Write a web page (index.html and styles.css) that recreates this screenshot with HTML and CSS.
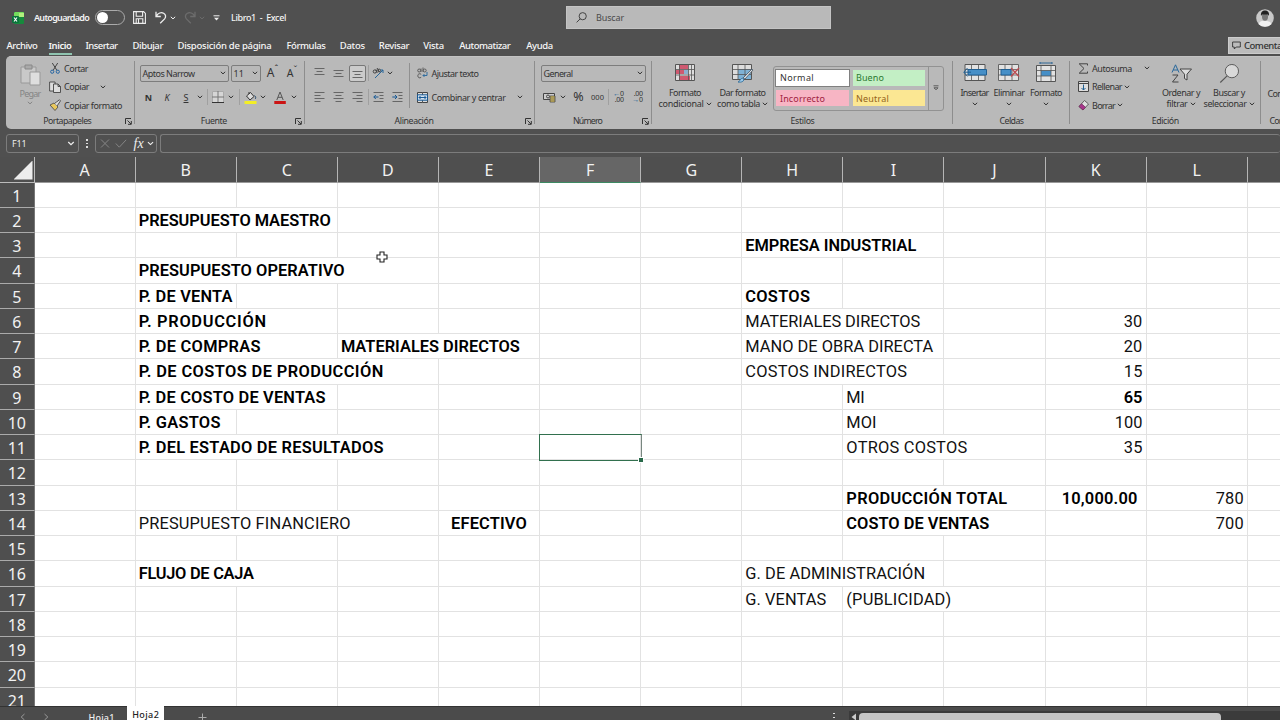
FILE: index.html
```html
<!DOCTYPE html>
<html lang="es">
<head>
<meta charset="utf-8">
<title>Libro1 - Excel</title>
<link rel="stylesheet" href="styles.css">
</head>
<body>
<svg width="0" height="0" class="defs">
  <symbol id="chev" viewBox="0 0 6 4"><path d="M.8.8 3 2.9 5.2.8" fill="none" stroke="currentColor" stroke-width="1"/></symbol>
  <symbol id="launch" viewBox="0 0 7 7"><path d="M.5 6V.5H6M2.5 2.5 6 6M6.3 3v3.3H3" fill="none" stroke="currentColor" stroke-width="1"/></symbol>
</svg>
<div class="app">
  <header class="title">
    <svg class="logo" width="12" height="12" viewBox="0 0 12 12"><rect x="2" y="0" width="10" height="12" rx="1" fill="#168a3c"/><path d="M3 0h8a1 1 0 0 1 1 1v4H2V1z" fill="#74dc5d"/><path d="M7 1h5v4H7z" fill="#b2ef7e"/><rect y="4" width="7" height="7" rx="1" fill="#08733b"/><path d="M2 5.5 5 9.5M5 5.5 2 9.5" stroke="#fff" stroke-width="1.1"/></svg>
    <b class="auto" data-w="55">Autoguardado</b>
    <span class="toggle"></span>
    <svg class="save" width="13" height="13" viewBox="0 0 13 13" fill="none" stroke="#eee" stroke-width="1.1"><path d="M.6.6h10L12.4 2.4v10H.6zM3.2.8v4.4h6.4V.8M3.2 12.2V7.8h6.6v4.4M5.5 8v4"/></svg>
    <svg class="undo" width="12" height="13" viewBox="0 0 12 13" fill="none" stroke="#eee" stroke-width="1.3"><path d="M1 .8v4.7h4.8M1.2 5.2C3 2 6.2.9 8.6 2.2c2.4 1.3 2.5 4 1 5.7L5.2 12.3"/></svg>
    <svg class="c1 light" width="6" height="4"><use href="#chev"/></svg>
    <svg class="redo" width="12" height="13" viewBox="0 0 12 13" fill="none" stroke="#6c6c6c" stroke-width="1.3"><path d="M11 .8v4.7H6.2M10.8 5.2C9 2 5.8.9 3.4 2.2c-2.4 1.3-2.5 4-1 5.7l4.4 4.4"/></svg>
    <svg class="c2" width="6" height="4"><use href="#chev"/></svg>
    <svg class="qat" width="7" height="6" viewBox="0 0 7 6"><path d="M.5.8h6" stroke="#eee"/><path d="M1 2.8h5L3.5 5.5z" fill="#eee"/></svg>
    <span class="book" data-w="55">Libro1&nbsp; -&nbsp; Excel</span>
    <div class="search"><svg width="11" height="11" viewBox="0 0 11 11" fill="none" stroke="#444" stroke-width="1"><circle cx="6.7" cy="4.2" r="3.6"/><path d="M4.2 6.8.6 10.4"/></svg><span data-w="28">Buscar</span></div>
    <svg class="avatar" width="18" height="18" viewBox="0 0 18 18"><circle cx="9" cy="9" r="8.8" fill="#c9c9c9"/><path d="M2.5 15C4 11.5 6 12 9 12s5 0 6.5 3A8.8 8.8 0 0 1 2.5 15z" fill="#f0f0f0"/><ellipse cx="9" cy="7.8" rx="3" ry="4" fill="#777"/><path d="M5 7C4.500 3 6.500 1.500 9 1.500S13.500 3 13 7L12 5.500H6z" fill="#222"/></svg>
  </header>
  <nav class="tabs">
    <span class="tab t1" data-w="31">Archivo</span><span class="tab t2 on" data-w="23">Inicio</span><span class="tab t3" data-w="32">Insertar</span><span class="tab t4" data-w="30.500">Dibujar</span><span class="tab t5" data-w="94">Disposición de página</span><span class="tab t6" data-w="39">Fórmulas</span><span class="tab t7" data-w="25">Datos</span><span class="tab t8" data-w="30.500">Revisar</span><span class="tab t9" data-w="20.500">Vista</span><span class="tab t10" data-w="51">Automatizar</span><span class="tab t11" data-w="26.500">Ayuda</span>
    <div class="comments"><svg width="9" height="9" viewBox="0 0 9 9" fill="none" stroke="#333" stroke-width=".9"><path d="M.6 1h7.700v5H4.200L2.300 8V6H.6z"/></svg><span data-w="53">Comentarios</span></div>
  </nav>

  <section class="ribbon">
    <div class="group g-clip">
      <div class="body clip">
        <div class="paste"><svg width="21" height="22" viewBox="0 0 21 22"><path d="M1 3h15v16H1z" fill="#c9c9c9" stroke="#999"/><path d="M5 1h7v4H5z" fill="#aaa" stroke="#888"/><path d="M10 8h10v13H10z" fill="#dedede" stroke="#999"/></svg><span data-w="21">Pegar</span><svg width="6" height="4"><use href="#chev"/></svg></div>
        <div class="stack">
          <div class="li"><svg width="12" height="12" viewBox="0 0 12 12" fill="none"><path d="M3.300 1 8 8.500M8.700 1 4 8.500" stroke="#444"/><circle cx="3.200" cy="9.700" r="1.600" stroke="#2767a5"/><circle cx="8.800" cy="9.700" r="1.600" stroke="#2767a5"/></svg><span data-w="24">Cortar</span></div>
          <div class="li"><svg width="12" height="12" viewBox="0 0 12 12" fill="#ddd" stroke="#444" stroke-width=".9"><path d="M.6 1h5.500v9H.6z"/><path d="M4.500 3H9l2.500 2.500v6h-7zM9 3v2.500h2.500"/></svg><span data-w="25">Copiar</span><svg class="gap" width="6" height="4"><use href="#chev"/></svg></div>
          <div class="li"><svg width="12" height="12" viewBox="0 0 12 12"><path d="m1 6 4-2 4 4-3 3.500z" fill="#e9c85c" stroke="#444" stroke-width=".8"/><path d="m5.500 4.500 2-1.500L10.500.8l1 1L9.400 5 8 7" fill="#ddd" stroke="#444" stroke-width=".9"/></svg><span data-w="58">Copiar formato</span></div>
        </div>
      </div>
      <div class="label"><span data-w="48">Portapapeles</span><svg class="launch" width="7" height="7"><use href="#launch"/></svg></div>
    </div>

    <div class="group g-font">
      <div class="body">
        <div class="row font1"><div class="combo"><span data-w="52">Aptos Narrow</span><svg width="6" height="4"><use href="#chev"/></svg></div><div class="combo"><span>11</span><svg width="6" height="4"><use href="#chev"/></svg></div><span class="big">A<sup>ˆ</sup></span><span class="big sm">A<sup>ˇ</sup></span></div>
        <div class="row font2"><b>N</b><i>K</i><u>S</u><svg width="6" height="4"><use href="#chev"/></svg><em class="sep"></em>
          <svg width="12" height="12" viewBox="0 0 12 12"><path d="M.5.5h11v11H.5z" fill="#d6d6d6" stroke="#aaa"/><path d="M6 0v12M0 6h12" stroke="#777"/><path d="M0 11.500h12" stroke="#333"/></svg><svg width="6" height="4"><use href="#chev"/></svg><em class="sep"></em>
          <svg width="13" height="13" viewBox="0 0 13 13"><path d="m2.500 5 4-3.500 3.500 4-4 3.500z" fill="#ddd" stroke="#333"/><path d="M5 3V1" stroke="#333"/><path d="M10.500 4.500c1.500 1 1.500 3 .5 3.500" stroke="#246" fill="none"/><path d="M.5 10h12v3H.5z" fill="#f3ee25"/></svg><svg width="6" height="4"><use href="#chev"/></svg>
          <svg width="12" height="13" viewBox="0 0 12 13"><path d="M2.800 9 6 1l3.200 8M4 6.300h4" stroke="#555" fill="none"/><path d="M.3 10h11.500v3H.3z" fill="#cb1414"/></svg><svg width="6" height="4"><use href="#chev"/></svg></div>
      </div>
      <div class="label"><span data-w="26">Fuente</span><svg class="launch" width="7" height="7"><use href="#launch"/></svg></div>
    </div>

    <div class="group g-align">
      <div class="body duo">
        <div class="left">
          <div class="row al1">
            <svg width="11" height="11" viewBox="0 0 11 11"><path d="M.5 .5h10M2.500 3.500h6M.5 6.500h10" stroke="#666"/></svg>
            <svg width="11" height="11" viewBox="0 0 11 11"><path d="M.5 2.500h10M2.500 5.500h6M.5 8.500h10" stroke="#666"/></svg>
            <span class="pressed"><svg width="11" height="11" viewBox="0 0 11 11"><path d="M.5 3.500h10M2.500 6.500h6M.5 9.500h10" stroke="#666"/></svg></span><em class="sep"></em>
            <svg width="12" height="12" viewBox="0 0 12 12" fill="none"><circle cx="2.800" cy="4.500" r="1.600" stroke="#444"/><path d="M4 2.500 5.200 6M5 1l2.500 4" stroke="#444"/><circle cx="7.200" cy="3.500" r="1.400" stroke="#444"/><path d="M3 11 11 3M11 6V3H8.500" stroke="#27679b"/></svg><svg width="6" height="4"><use href="#chev"/></svg>
          </div>
          <div class="row al2">
            <svg width="11" height="12" viewBox="0 0 11 12"><path d="M.5 1.500h10M.5 4.500h6M.5 7.500h10M.5 10.500h6" stroke="#666"/></svg>
            <svg width="11" height="12" viewBox="0 0 11 12"><path d="M.5 1.500h10M2.500 4.500h6M.5 7.500h10M2.500 10.500h6" stroke="#666"/></svg>
            <svg width="11" height="12" viewBox="0 0 11 12"><path d="M.5 1.500h10M4.500 4.500h6M.5 7.500h10M4.500 10.500h6" stroke="#666"/></svg><em class="sep"></em>
            <svg width="11" height="12" viewBox="0 0 11 12" fill="none"><path d="M.5 1.500h10M6.500 4.500h4M6.500 7.500h4M.5 10.500h10" stroke="#666"/><path d="M5.500 6H.8M2.800 4l-2 2 2 2" stroke="#175995"/></svg>
            <svg width="11" height="12" viewBox="0 0 11 12" fill="none"><path d="M.5 1.500h10M6.500 4.500h4M6.500 7.500h4M.5 10.500h10" stroke="#666"/><path d="M.3 6H5M3 4l2 2-2 2" stroke="#175995"/></svg>
          </div>
        </div>
        <div class="right">
          <div class="row al3"><svg width="11" height="12" viewBox="0 0 11 12" fill="none" stroke="#555" stroke-width=".9"><circle cx="2.200" cy="3.500" r="1.500"/><path d="M4 1.500V5M6 .5V5"/><circle cx="7.700" cy="3.500" r="1.500"/><path d="M4.200 7.300C2.500 6 .8 7 .8 8.800s1.700 2.800 3.400 1.500"/><path d="M10 5v3.500H6M7.500 7 6 8.500 7.500 10" stroke="#27679b"/></svg><span data-w="47">Ajustar texto</span></div>
          <div class="row al4"><svg width="11" height="11" viewBox="0 0 11 11" fill="none"><path d="M.5.500h10v10H.5z" fill="#ddd" stroke="#444"/><path d="M5.500 0v3M5.500 8v3" stroke="#555"/><path d="M.5 2.800h10v5.400H.5z" fill="#d6e2ee" stroke="#175995"/><path d="M2 5.500h7M3.500 4 2 5.500 3.500 7M7.500 4 9 5.500 7.500 7" stroke="#175995"/></svg><span data-w="74">Combinar y centrar</span><svg class="mchev" width="6" height="4"><use href="#chev"/></svg></div>
        </div>
      </div>
      <div class="label"><span data-w="39">Alineación</span><svg class="launch" width="7" height="7"><use href="#launch"/></svg></div>
    </div>

    <div class="group g-num">
      <div class="body">
        <div class="row num1"><div class="combo"><span data-w="29">General</span><svg width="6" height="4"><use href="#chev"/></svg></div></div>
        <div class="row num2"><svg width="13" height="11" viewBox="0 0 13 11"><path d="M.5 1.500h11v6H.5z" fill="#ccc" stroke="#444"/><circle cx="5" cy="4.500" r="1.500" fill="none" stroke="#444"/><path d="M7 4h5v6H7z" fill="#e4c95a" stroke="#444" stroke-width=".8"/><path d="M7 6h5M7 8h5" stroke="#555" stroke-width=".8"/></svg><svg width="6" height="4"><use href="#chev"/></svg><span class="pct">%</span><span class="zeros">000</span><em class="sep"></em>
          <span class="dec"><span><s>←</s>0</span><span>.00</span></span><span class="dec"><span>.00</span><span><s>→</s>0</span></span></div>
      </div>
      <div class="label"><span data-w="29">Número</span><svg class="launch" width="7" height="7"><use href="#launch"/></svg></div>
    </div>

    <div class="group g-style">
      <div class="body styles">
        <div class="tall"><svg width="20" height="17" viewBox="0 0 20 17"><path d="M.5.500h19v16H.5z" fill="#ddd" stroke="#555"/><path d="M4 1h9v4H4zM4 12h11v4H4zM1 6h8v4H1z" fill="#cf5970"/><path d="M9 6h4v4H9z" fill="#8eafd0"/><path d="M.5 5.500h19M.5 11h19M4.500.5v16M13.500.5v16M16.500.5v16" stroke="#555" stroke-width=".8"/></svg><span data-w="32">Formato</span><span><span data-w="45">condicional</span><svg width="6" height="4"><use href="#chev"/></svg></span></div>
        <div class="tall"><svg width="22" height="19" viewBox="0 0 22 19"><path d="M.5.500h19v15H.5z" fill="#ddd" stroke="#555"/><path d="M6 5h13v10H6z" fill="#7fb2d5"/><path d="M.5 5.500h19M.5 10.500h19M6 .5v15M13 .5v15" stroke="#555" stroke-width=".8"/><path d="m20 5 1 1-8 9-2-1z" fill="#ddd" stroke="#456" stroke-width=".8"/><path d="M6 18c2 0 2-4 5-4 2 2 0 5-5 4z" fill="#9dcaea" stroke="#2c6a97" stroke-width=".8"/></svg><span data-w="46">Dar formato</span><span><span data-w="43">como tabla</span><svg width="6" height="4"><use href="#chev"/></svg></span></div>
        <div class="gallery"><div class="chips"><span class="chip normal"><span data-w="34">Normal</span></span><span class="chip good"><span data-w="28">Bueno</span></span><span class="chip bad"><span data-w="45">Incorrecto</span></span><span class="chip neutral"><span data-w="33">Neutral</span></span></div><div class="more"><svg width="6" height="6" viewBox="0 0 6 6" fill="none" stroke="#444" stroke-width=".8"><path d="M.5.800h5M1 2.800h4L3 4.800z"/></svg></div></div>
      </div>
      <div class="label"><span data-w="24">Estilos</span></div>
    </div>

    <div class="group g-cells">
      <div class="body cellsb">
        <div class="tall"><svg width="24" height="17" viewBox="0 0 24 17"><path d="M2 .5h20v16H2z" fill="#e2e2e2" stroke="#555"/><path d="M2 5.500h20M2 11h20M8.500.5v16M15.500.5v16" stroke="#555" stroke-width=".8"/><path d="M5 5.500h18.500V11H5z" fill="#468fc7" stroke="#205f92"/><path d="M8 8.200H1M4.500 4 .8 8.200l3.700 4.200" fill="none" stroke="#205f92"/></svg><span data-w="28">Insertar</span><svg width="6" height="4"><use href="#chev"/></svg></div>
        <div class="tall"><svg width="22" height="17" viewBox="0 0 22 17"><path d="M.5.500h20v16H.5z" fill="#e2e2e2" stroke="#666"/><path d="M.5 5.500h20M.5 11h20M7 .5v16M14 .5v16" stroke="#555" stroke-width=".8"/><path d="M3 5.500h10V11H3z" fill="#468fc7" stroke="#205f92"/><path d="m13 4 8 8.500M21 4l-8 8.500" stroke="#bb4b51" stroke-width="1.400"/></svg><span data-w="31">Eliminar</span><svg width="6" height="4"><use href="#chev"/></svg></div>
        <div class="tall fmt"><svg width="20" height="20" viewBox="0 0 20 20"><path d="M4 1h12M4 0v2M16 0v2" stroke="#205f92" stroke-width=".9"/><path d="M.5 3.500h19v16H.5z" fill="#e2e2e2" stroke="#555"/><path d="M5 8.500h10V14H5z" fill="#468fc7"/><path d="M.5 8.500h19M.5 14h19M5 3.500v16M15 3.500v16" stroke="#555" stroke-width=".8"/></svg><span data-w="32">Formato</span><svg width="6" height="4"><use href="#chev"/></svg></div>
      </div>
      <div class="label"><span data-w="24">Celdas</span></div>
    </div>

    <div class="group g-edit">
      <div class="body edit">
        <div class="stack">
          <div class="li"><svg width="11" height="11" viewBox="0 0 11 11"><path d="M9.500 2.500V.8H1.200L6 5.500 1.200 10.200h8.300V8.500" fill="none" stroke="#444"/></svg><span data-w="40">Autosuma</span><svg class="gap" width="6" height="4"><use href="#chev"/></svg></div>
          <div class="li"><svg width="11" height="11" viewBox="0 0 11 11"><path d="M.5.500h10v10H.5z" fill="#ddd" stroke="#444"/><path d="M.5 2.500h10" stroke="#444"/><path d="M5.500 3.500V9M3.500 7l2 2 2-2" fill="none" stroke="#205f92"/></svg><span data-w="30">Rellenar</span><svg class="near" width="6" height="4"><use href="#chev"/></svg></div>
          <div class="li"><svg width="11" height="11" viewBox="0 0 11 11"><path d="m1 6.500 5.500-6 4 3.500L5 10z" fill="#e0e0e0" stroke="#444" stroke-width=".8"/><path d="m1 6.500 2.500-2.700L7.500 7.300 5 10z" fill="#a9358c" stroke="#743060" stroke-width=".8"/></svg><span data-w="23">Borrar</span><svg class="near" width="6" height="4"><use href="#chev"/></svg></div>
        </div>
        <div class="tall"><svg width="21" height="19" viewBox="0 0 21 19" fill="none"><path d="M1 8.500 4.500.8 8 8.500M2.300 6h4.500" stroke="#27679b"/><path d="M1.500 11h5.500L1.500 18H7.500" stroke="#444"/><path d="M9 5h11.500l-4.500 5.200V16l-2.500-1.500v-4.300z" fill="#ddd" stroke="#444"/></svg><span data-w="38">Ordenar y</span><span><span data-w="21">filtrar</span><svg width="6" height="4"><use href="#chev"/></svg></span></div>
        <div class="tall find"><svg width="21" height="20" viewBox="0 0 21 20"><circle cx="13" cy="7.500" r="7" fill="#d9d9d9" stroke="#555"/><path d="M8 12.500.8 19.500" stroke="#555" stroke-width="1.200"/></svg><span data-w="32">Buscar y</span><span><span data-w="43">seleccionar</span><svg width="6" height="4"><use href="#chev"/></svg></span></div>
      </div>
      <div class="label"><span data-w="27">Edición</span></div>
    </div>
    <div class="group g-last"><div class="body"><span data-w="56">Complementos</span></div><div class="label"><span data-w="54">Complementos</span></div></div>
  </section>

  <div class="formula">
    <div class="namebox"><span data-w="14.500">F11</span><svg width="8" height="5"><use href="#chev"/></svg></div>
    <span class="dots"></span>
    <div class="fxbox"><svg width="10" height="9" viewBox="0 0 10 9"><path d="m1 .5 8 8M9 .5l-8 8" stroke="#858585"/></svg><svg width="12" height="9" viewBox="0 0 12 9"><path d="m.8 4.500 3.500 3.700L11.200.8" fill="none" stroke="#858585"/></svg><i>fx</i><svg width="7" height="5"><use href="#chev"/></svg></div>
    <div class="input"></div>
  </div>

  <main class="sheet">
    <div class="heads" id="heads"></div>
    <div id="rows"></div>
    <div class="selection"></div>
    <svg class="cursor" width="12" height="12" viewBox="0 0 12 12"><path d="M4 1h4v3h3v4H8v3H4V8H1V4h3z" fill="#fff" stroke="#222" stroke-width="1.100"/></svg>
  </main>

  <footer class="bottom">
    <svg class="nav" width="6" height="8" viewBox="0 0 6 8"><path d="M4.500 1 1.200 4l3.300 3" fill="none" stroke="#999"/></svg>
    <svg class="nav" width="6" height="8" viewBox="0 0 6 8"><path d="M1.500 1l3.300 3-3.300 3" fill="none" stroke="#999"/></svg>
    <span class="sh1" data-w="26">Hoja1</span>
    <span class="sh2"><span data-w="27">Hoja2</span></span>
    <svg class="plus" width="9" height="9" viewBox="0 0 9 9"><path d="M4.500.5v8M.5 4.500h8" stroke="#aaa"/></svg>
    <span class="dots sdots"></span>
    <div class="track"><svg width="5" height="8" viewBox="0 0 5 8"><path d="M5 .5v7L.5 4z" fill="#ccc"/></svg><div class="thumb"></div></div>
  </footer>
</div>
<script src="sheet.js"></script>
</body>
</html>
```
FILE: styles.css
```css
* { box-sizing: border-box; }
body { margin: 0; background: #4f4f4f; font-family: "Noto Sans", "Open Sans", sans-serif; font-size: 9px; color: #333; overflow: hidden; }
.defs { position: absolute; }
svg { display: block; flex: none; }
span { white-space: nowrap; }
[data-w] { display: inline-block; flex: none; }
.app { width: 1280px; height: 720px; overflow: hidden; display: flex; flex-direction: column; background: #505050; }

.title { height: 35px; flex: none; display: flex; align-items: center; color: #f4f4f4; padding-left: 11.5px; }
.auto { margin-left: 10.5px; font-weight: 600; }
.toggle { width: 30px; height: 15px; border: 1px solid #aaa; border-radius: 8px; margin-left: 6px; display: flex; align-items: center; padding-left: 1px; }
.toggle::before { content: ""; width: 11px; height: 11px; border-radius: 50%; background: #fff; }
.save { margin-left: 8px; }
.undo { margin-left: 9px; }
.c1 { margin-left: 3px; }
.redo { margin-left: 8px; }
.c2 { margin-left: 3px; color: #6c6c6c; }
.qat { margin-left: 8px; }
.book { margin-left: 11px; font-weight: 500; }
.search { width: 265px; height: 23px; margin-left: 280px; background: #b9b9b9; border: 1px solid #c4c4c4; display: flex; align-items: center; padding-left: 9px; gap: 9px; color: #4a4a4a; }
.avatar { margin-left: 424.5px; }

.tabs { height: 21px; flex: none; display: flex; align-items: center; padding-left: 6.5px; color: #f6f6f6; font-size: 9.5px; font-weight: 500; }
.tab { height: 18px; line-height: 18px; }
.tab + .tab { margin-left: 15px; }
.tab.t2 { margin-left: 11px; }
.tab.t3 { margin-left: 14px; }
.tab.t4 { margin-left: 15px; }
.tab.t5 { margin-left: 14.5px; }
.tab.t7 { margin-left: 14.3px; }
.tab.t8 { margin-left: 14px; }
.tab.t9 { margin-left: 14px; }
.tab.t10 { margin-left: 15.5px; }
.tab.t11 { margin-left: 16px; }
.on { border-bottom: 2px solid #8fc4b0; font-weight: 600; }
.comments { width: 80px; height: 17px; margin-left: auto; margin-right: -28px; background: #bcbcbc; border: 1px solid #ccc; display: flex; align-items: center; gap: 3px; padding-left: 3px; color: #333; font-weight: 500; }

.ribbon { height: 72.5px; width: 1300px; flex: none; margin-left: 6px; background: #b9b9b9; border-radius: 5px; display: flex; border-top: 1px solid #c3c3c3; }
.group { height: 72px; flex: none; display: grid; grid-template-rows: 57px 14px; position: relative; }
.group:not(.g-last)::after { content: ""; position: absolute; right: 0; top: 4px; bottom: 5px; width: 1px; background: #8d8d8d; }
.label { display: flex; justify-content: center; align-items: center; font-size: 8.8px; position: relative; }
.launch { position: absolute; right: 3px; top: 4px; }
.g-clip { width: 128.5px; }
.g-clip .label { padding-right: 10px; padding-left: 0; }
.g-clip .label > span { position: static; margin-left: 4px; }
.g-font { width: 170.5px; }
.g-align { width: 230px; }
.g-num { width: 117px; }
.g-style { width: 301px; }
.g-cells { width: 117px; }
.g-edit { width: 190.5px; }
.g-last { width: 70px; }
.g-last .body { padding: 29.5px 0 0 7px; }
.g-last .label { justify-content: flex-start; padding-left: 9px; }
.g-font .label, .g-num .label { padding-right: 12px; }
.g-align .label { padding-right: 12px; }

.clip { display: grid; grid-template-columns: 43px 1fr; padding-top: 2px; }
.paste { display: flex; flex-direction: column; align-items: center; color: #858585; padding: 5px 0 0 5px; line-height: 15px; }
.stack { display: flex; flex-direction: column; }
.li { height: 18.5px; display: flex; align-items: center; }
.li [data-w] { margin-left: 3px; }
.clip .gap { margin-left: 11px; }

.row { height: 24px; display: grid; align-items: center; justify-items: center; }
.body > .row:first-child, .left > .row:first-child, .right > .row:first-child { margin-top: 4px; }
.combo { width: 100%; height: 17px; border: 1px solid #7d7d7d; border-radius: 2px; display: flex; align-items: center; justify-content: space-between; padding: 0 2px 0 1.5px; }
.font1 { grid-template-columns: 88.5px 30px 18px 20px; column-gap: 2.5px; padding-left: 5.5px; }
.big { font-size: 12px; line-height: 14px; }
.big sup { font-size: 9px; line-height: 0; }
.big.sm { font-size: 10.5px; margin-left: -4px; }
.font2 { grid-template-columns: 17px 20px 18px 10px 5px 15px 12px 5px 16px 10px 23px 5px; padding-left: 5.5px; }
.sep { width: 1px; height: 16px; background: #a0a0a0; }
.duo { display: flex; }
.left { width: 105px; padding-left: 5.5px; }
.left::after { content: ""; display: block; width: 1px; height: 45px; background: #909090; margin: -46px 0 0 auto; }
.right { padding-left: 4px; }
.al1 { grid-template-columns: 18px 19.5px 18.5px 3px 17px 7px; justify-content: start; }
.al2 { grid-template-columns: 18px 19.5px 18.5px 3px 17px 21px; justify-content: start; }
.al2 svg { margin-top: -1px; }
.pressed { width: 17px; height: 17px; border: 1px solid #777; border-radius: 2px; background: #cbcbcb; display: grid; place-items: center; }
.al3, .al4 { grid-template-columns: 17.5px auto auto; justify-content: start; }
.mchev { margin-left: 11px; }
.num1 { grid-template-columns: 104.5px; padding-left: 6px; }
.num2 { grid-template-columns: 18px 9px 23px 15px 7px 13px 25px; padding-left: 5px; }
.pct { font-size: 12.5px; line-height: 16px; }
.zeros { font-size: 7.5px; }
.dec { font-size: 7px; line-height: 6.5px; display: flex; flex-direction: column; align-items: flex-end; letter-spacing: -.3px; }
.dec s { text-decoration: none; color: #175995; }

.tall { display: flex; flex-direction: column; align-items: center; padding-top: 7px; }
.tall > svg:first-child { margin-bottom: 3.5px; height: 19px; }
.styles .tall:first-child > svg:first-child, .cellsb .tall:not(.fmt) > svg:first-child { height: 17px; margin-bottom: 5.5px; }
.tall > span { line-height: 11.5px; display: flex; align-items: center; gap: 2px; }
.tall > svg:last-child { margin-top: 4px; }
.styles { display: grid; grid-template-columns: 58px 57px 173px; padding-left: 4px; }
.gallery { margin: 8.5px 0 3px 2px; border: 1px solid #929292; border-radius: 3px; display: grid; grid-template-columns: 154px 1fr; height: 45px; }
.chips { display: grid; grid-template-columns: 75px 74px; grid-template-rows: 18px 18px; gap: 2.5px 2px; padding: 2px 0 0 1px; }
.chip { display: flex; align-items: center; padding-left: 4px; height: 16px; margin: 1px; }
.normal { background: #fff; outline: 1.5px solid #808080; }
.good { background: #c3efc5; color: #2c7a30; padding-left: 3px; }
.bad { background: #f7b5c4; color: #a02040; }
.neutral { background: #fbe793; color: #94641a; padding-left: 3px; }
.more { border-left: 1px solid #929292; display: grid; place-items: center; }
.cellsb { display: grid; grid-template-columns: 34px 35px 39px; padding-left: 4.5px; }
.cellsb .tall.fmt { padding-top: 4.5px; }
.cellsb .fmt > svg:first-child { height: 20px; margin-bottom: 5px; }
.edit { display: grid; grid-template-columns: 84px 48px 48px; padding: 2px 0 0 3px; }
.edit .stack { padding-left: 5px; }
.edit .tall { padding-top: 5px; }
.edit .gap { margin-left: 12px; }
.near { margin-left: 2px; }

.formula { height: 28px; flex: none; display: flex; align-items: flex-start; padding: 5.5px 0 0 6px; color: #eee; }
.namebox, .fxbox, .input { height: 19px; border: 1px solid #7c7c7c; border-radius: 3px; display: flex; align-items: center; }
.namebox { width: 73px; justify-content: space-between; padding: 0 3px 0 5px; }
.dots { width: 1.5px; height: 9px; margin: 5px 7px 0 7px; background: repeating-linear-gradient(#ddd 0 1.5px, transparent 1.5px 3.7px); }
.fxbox { width: 62px; padding: 0 1px 0 4px; gap: 5px; }
.fxbox i { font: italic 400 14px "Liberation Serif", serif; margin-left: 2px; }
.fxbox svg:last-child { margin-left: -2px; }
.input { flex: 1; margin-left: 3px; border-right: 0; }

.sheet { height: 549.5px; flex: none; overflow: hidden; position: relative; background: #fff; font-family: Roboto, "Open Sans", sans-serif; font-size: 16.4px; color: #111; }
.heads { height: 26px; display: flex; background: #4f4f4f; color: #f2f2f2; font: 16px "Noto Sans", "Open Sans", sans-serif; }
.corner { width: 34.6px; flex: none; border-right: 1px solid #bbb; border-bottom: 1px solid #bbb; }
.corner::before { content: ""; display: block; width: 19px; height: 19px; margin: 4px 0 0 13.5px; background: #ededed; clip-path: polygon(100% 0, 100% 100%, 0 100%); }
.head { width: 101.1px; flex: none; border-right: 1px solid #b5b5b5; border-bottom: 1px solid #999; text-align: center; line-height: 27px; }
.head.sel { background: #666; border-bottom: 1px solid #3d8a63; }
.line { display: flex; height: 25.25px; }
.num { width: 34.6px; flex: none; background: #4f4f4f; color: #f2f2f2; font: 16px/26px "Noto Sans", "Open Sans", sans-serif; text-align: center; border-bottom: 1px solid #aaa; border-right: 1px solid #777; }
.cell { flex: none; border-right: 1px solid #e2e2e2; border-bottom: 1px solid #e2e2e2; padding: 0 3px; line-height: 26.8px; white-space: nowrap; }
.bold { font-weight: 600; color: #000; }
.r { text-align: right; }
.c { text-align: center; }
.acc { padding-right: 8px; }
.selection { position: absolute; left: 538.5px; top: 277px; width: 103px; height: 27.5px; border: 1.5px solid #32704e; border-right-color: #788780; }
.selection::after { content: ""; position: absolute; right: -2px; bottom: -2px; width: 4px; height: 4px; background: #28694a; outline: 1px solid #fff; }
.cursor { position: absolute; left: 376px; top: 94px; }

.bottom { height: 14px; flex: none; background: #4b4b4b; border-top: 1px solid #333; display: flex; align-items: flex-start; color: #eee; }
.nav { margin: 6px 0 0 20px; }
.nav + .nav { margin-left: 17px; }
.sh1 { margin: 4px 0 0 39.5px; line-height: 13px; font-weight: 500; }
.sh2 { margin: -1px 0 0 12px; width: 39px; height: 15px; background: #fff; color: #222; text-align: center; line-height: 18px; font-weight: 500; }
.sh2 { padding-left: 1px; }
.plus { margin: 6px 0 0 34px; }
.sdots { margin: 6px 0 0 626.5px; }
.track { margin: 4px 0 0 14px; width: 450px; height: 12px; background: #3b3b3b; display: flex; gap: 3px; padding: 2px 0 0 2px; }
.thumb { width: 362px; height: 8px; background: #c5c5c5; border-radius: 4px 4px 0 0; }
```
FILE: sheet.js
```javascript
const COL = 101.1;
const letters = "ABCDEFGHIJKLM";
// column, row, text, columns spanned, classes, text width
const data = [
  ["B", 2, "PRESUPUESTO MAESTRO", 2, "bold", 192],
  ["B", 4, "PRESUPUESTO OPERATIVO", 3, "bold", 206],
  ["B", 5, "P. DE VENTA", 1, "bold", 94],
  ["B", 6, "P. PRODUCCIÓN", 2, "bold", 128],
  ["B", 7, "P. DE COMPRAS", 2, "bold", 122],
  ["D", 7, "MATERIALES DIRECTOS", 2, "bold", 179],
  ["B", 8, "P. DE COSTOS DE PRODUCCIÓN", 3, "bold", 245],
  ["B", 9, "P. DE COSTO DE VENTAS", 2, "bold", 187],
  ["B", 10, "P. GASTOS", 1, "bold", 82],
  ["B", 11, "P. DEL ESTADO DE RESULTADOS", 3, "bold", 245],
  ["B", 14, "PRESUPUESTO FINANCIERO", 3, "", 212],
  ["E", 14, "EFECTIVO", 1, "bold c", 76],
  ["B", 16, "FLUJO DE CAJA", 2, "bold", 115],
  ["H", 3, "EMPRESA INDUSTRIAL", 2, "bold", 171],
  ["H", 5, "COSTOS", 1, "bold", 65],
  ["H", 6, "MATERIALES DIRECTOS", 2, "", 175],
  ["H", 7, "MANO DE OBRA DIRECTA", 2, "", 188],
  ["H", 8, "COSTOS INDIRECTOS", 2, "", 162],
  ["I", 9, "MI", 1, "", 18],
  ["I", 10, "MOI", 1, "", 30],
  ["I", 11, "OTROS COSTOS", 2, "", 121],
  ["I", 13, "PRODUCCIÓN TOTAL", 2, "bold", 161],
  ["I", 14, "COSTO DE VENTAS", 2, "bold", 143],
  ["H", 16, "G. DE ADMINISTRACIÓN", 2, "", 180],
  ["H", 17, "G. VENTAS", 1, "", 81],
  ["I", 17, "(PUBLICIDAD)", 2, "", 105],
  ["K", 6, "30", 1, "r", 19],
  ["K", 7, "20", 1, "r", 19],
  ["K", 8, "15", 1, "r", 19],
  ["K", 9, "65", 1, "r bold", 19],
  ["K", 10, "100", 1, "r", 28],
  ["K", 11, "35", 1, "r", 19],
  ["K", 13, "10,000.00", 1, "r bold acc", 76],
  ["L", 13, "780", 1, "r", 28],
  ["L", 14, "700", 1, "r", 28]
];

let head = '<div class="corner"></div>';
for (const l of letters) head += `<div class="head${l === "F" ? " sel" : ""}">${l}</div>`;
document.getElementById("heads").innerHTML = head;

let html = "";
for (let r = 1; r <= 21; r++) {
  html += `<div class="line"><div class="num">${r}</div>`;
  for (let c = 0; c < letters.length;) {
    const d = data.find(x => x[0] === letters[c] && x[1] === r);
    const span = d ? d[3] : 1;
    html += `<div class="cell ${d ? d[4] : ""}" style="width:${COL * span}px">`;
    if (d) html += `<span data-w="${d[5]}">${d[2]}</span>`;
    html += "</div>";
    c += span;
  }
  html += "</div>";
}
document.getElementById("rows").innerHTML = html;

// Track each label to its nominal width.
for (const el of document.querySelectorAll("[data-w]")) {
  const target = parseFloat(el.dataset.w);
  const natural = el.getBoundingClientRect().width;
  el.style.letterSpacing = (target - natural) / el.textContent.length + "px";
}
```
